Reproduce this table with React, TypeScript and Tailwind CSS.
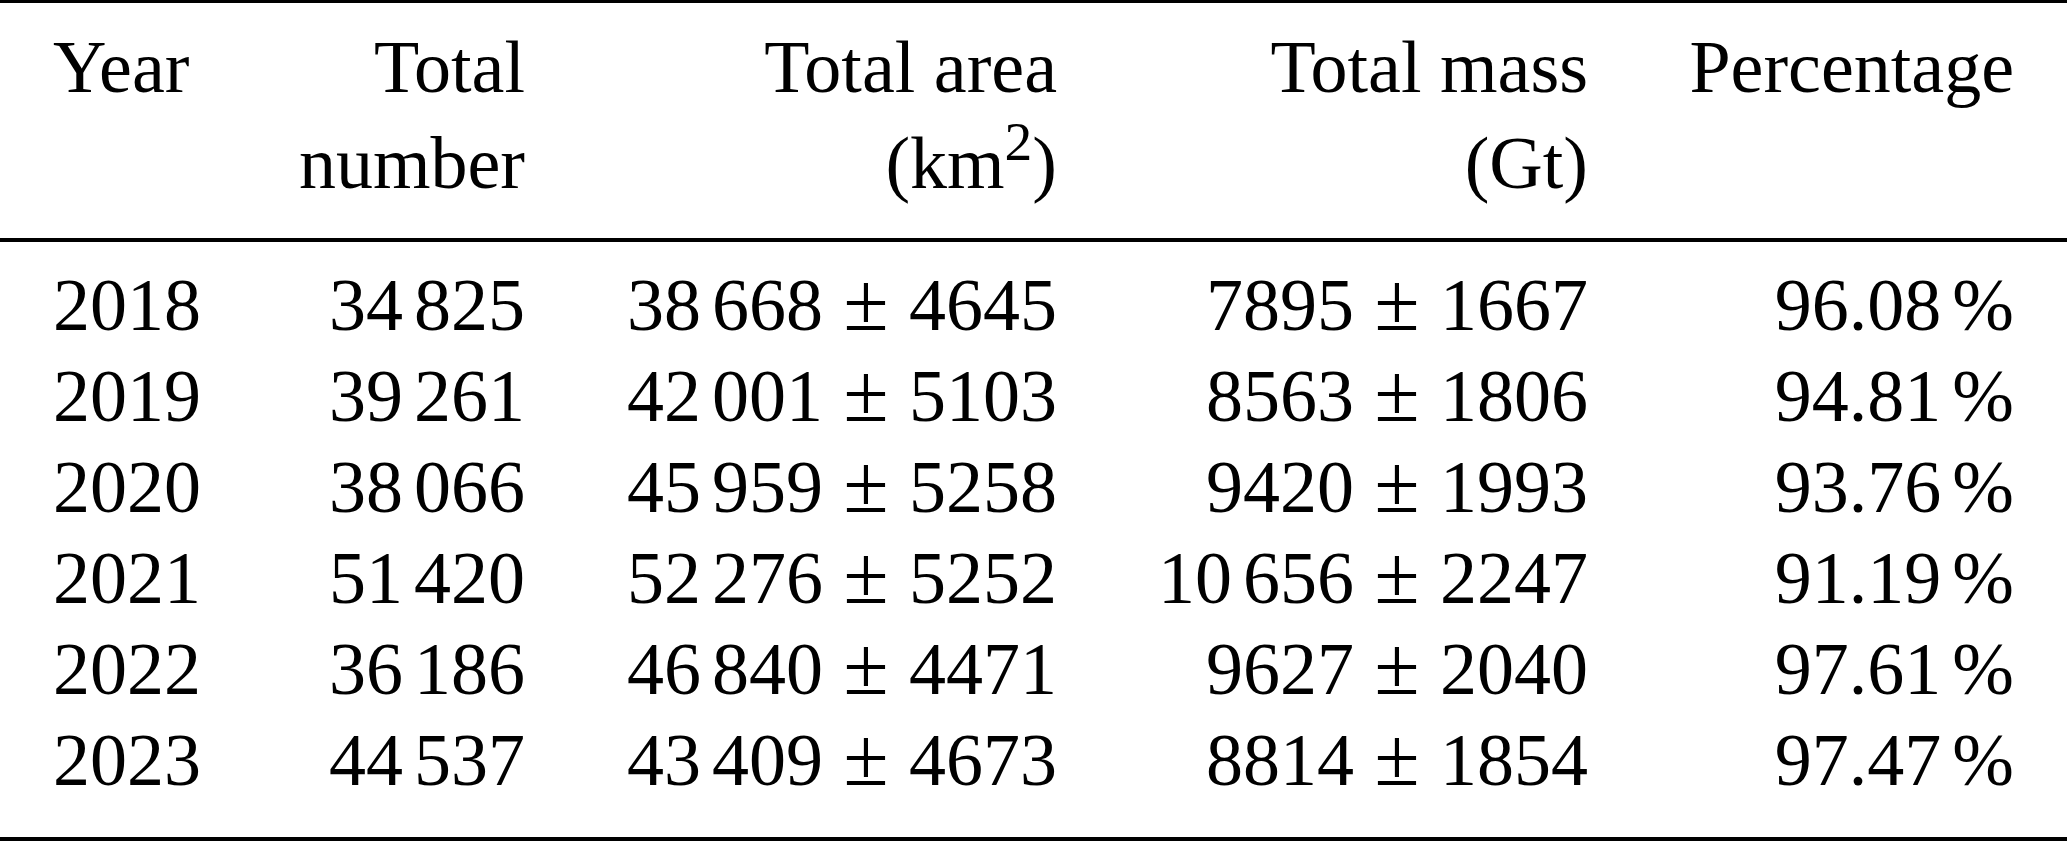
const rows = [
  { year: "2018", count: "34 825", area: "38 668", areaErr: "4645", mass: "7895", massErr: "1667", pct: "96.08" },
  { year: "2019", count: "39 261", area: "42 001", areaErr: "5103", mass: "8563", massErr: "1806", pct: "94.81" },
  { year: "2020", count: "38 066", area: "45 959", areaErr: "5258", mass: "9420", massErr: "1993", pct: "93.76" },
  { year: "2021", count: "51 420", area: "52 276", areaErr: "5252", mass: "10 656", massErr: "2247", pct: "91.19" },
  { year: "2022", count: "36 186", area: "46 840", areaErr: "4471", mass: "9627", massErr: "2040", pct: "97.61" },
  { year: "2023", count: "44 537", area: "43 409", areaErr: "4673", mass: "8814", massErr: "1854", pct: "97.47" },
];

// digit groups are split by a thin gap, like siunitx does
function Grouped({ value }: { value: string }) {
  const parts = value.split(" ");
  return (
    <>
      {parts.map((p, i) => (
        <span key={i}>
          {i > 0 && <span className="inline-block w-[11px]" />}
          {p}
        </span>
      ))}
    </>
  );
}

function PlusMinus({ value, err }: { value: string; err: string }) {
  return (
    <>
      <Grouped value={value} />
      <span className="inline-block w-[86px] text-center text-[82px] leading-[70px]">±</span>
      <Grouped value={err} />
    </>
  );
}

const cols = "grid grid-cols-[147px_325px_532px_531px_426px] px-[53px]";

export default function App() {
  return (
    <div className="w-[2067px] h-[841px] bg-white text-black font-['Liberation_Serif',serif] text-[74px]">
      <div className="h-[3px] bg-black" />
      <div className={`${cols} pt-[16px] pb-[27px] leading-[96px]`}>
        <div>Year</div>
        <div className="text-right">
          Total
          <br />
          number
        </div>
        <div className="text-right">
          Total area
          <br />
          (km<sup>2</sup>)
        </div>
        <div className="text-right">
          Total mass
          <br />
          (Gt)
        </div>
        <div className="text-right">Percentage</div>
      </div>
      <div className="h-[4px] bg-black" />
      <div className={`${cols} pt-[18px] pb-[31px] leading-[91px]`}>
        {rows.map((r) => (
          <div key={r.year} className="contents">
            <div>{r.year}</div>
            <div className="text-right">
              <Grouped value={r.count} />
            </div>
            <div className="text-right">
              <PlusMinus value={r.area} err={r.areaErr} />
            </div>
            <div className="text-right">
              <PlusMinus value={r.mass} err={r.massErr} />
            </div>
            <div className="text-right">
              {r.pct}
              <span className="inline-block w-[11px]" />%
            </div>
          </div>
        ))}
      </div>
      <div className="h-[4px] bg-black" />
    </div>
  );
}
